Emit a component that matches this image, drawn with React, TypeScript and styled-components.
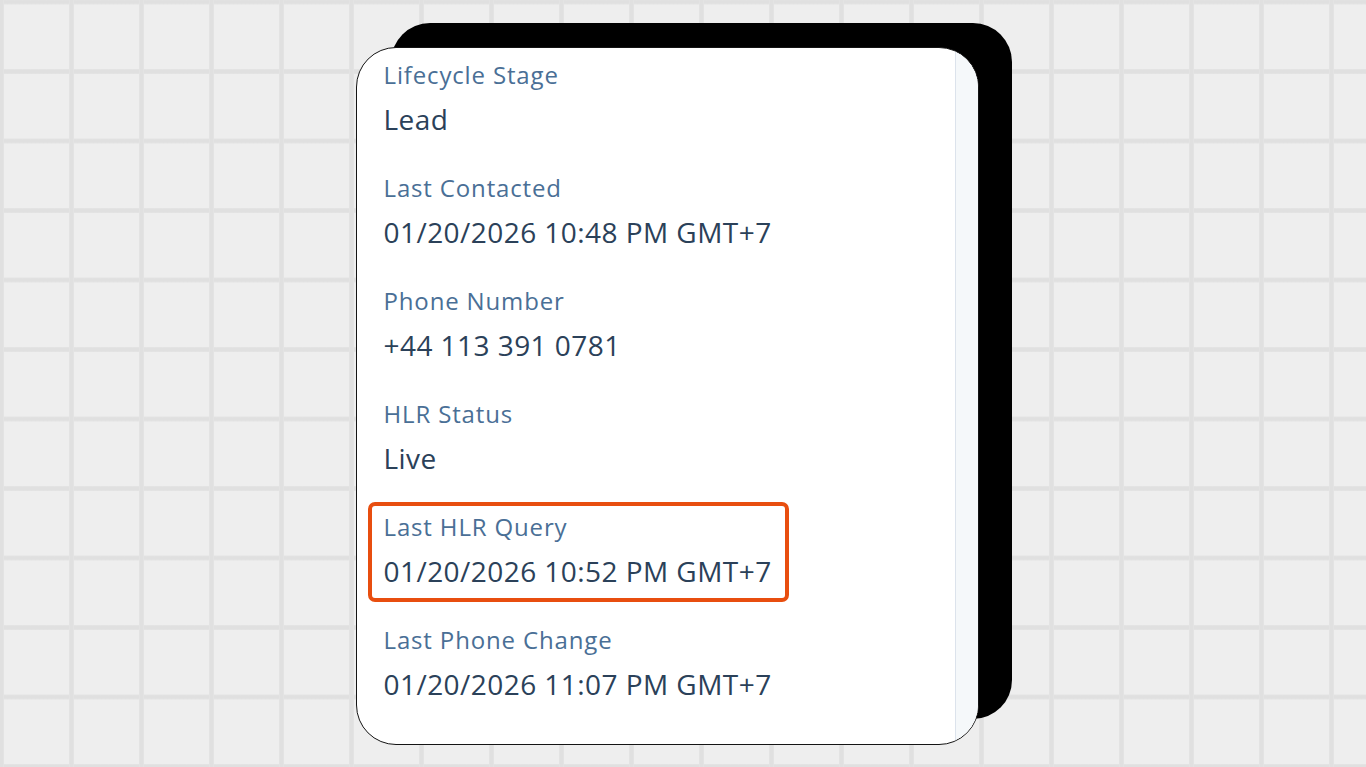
import styled, { createGlobalStyle } from 'styled-components';

const GlobalStyle = createGlobalStyle`
  html, body {
    margin: 0;
    padding: 0;
  }
  body {
    font-family: 'Open Sans', 'Noto Sans', sans-serif;
    background-color: #eeeeee;
    background-image:
      linear-gradient(to right, #e6e6e6 0, #e0e0e0 1px, #e0e0e0 4px, #e6e6e6 5px, transparent 5px),
      linear-gradient(to bottom, #e6e6e6 0, #e0e0e0 1px, #e0e0e0 4px, #e6e6e6 5px, transparent 5px);
    background-size: 70px 69.5px;
    background-position: 69px 69px;
  }
`;

// === LAYOUT ===

const Page = styled.div`
  width: 100vw;
  height: 100vh;
  display: flex;
  align-items: center;
  justify-content: center;
  overflow: hidden;
`;

const Stage = styled.div`
  padding: 25px 32px 0 0;
`;

const Card = styled.div`
  width: 623px;
  height: 698px;
  box-sizing: border-box;
  display: flex;
  background: #ffffff;
  border: 1.5px solid #141414;
  border-radius: 40px;
  overflow: hidden;
  box-shadow: 34px -25px 0 -1px #000000;
`;

const PropertyList = styled.div`
  flex: 1;
  padding: 11px 27px 0;
  display: flex;
  flex-direction: column;
`;

const ScrollTrack = styled.div`
  width: 22px;
  flex-shrink: 0;
  background: #f5f8fa;
  border-left: 1.5px solid #dce3ec;
`;

// === FIELD ===

const Field = styled.div<{ $highlight?: boolean }>`
  position: relative;
  margin-bottom: 33px;

  ${({ $highlight }) => $highlight && `
    &::after {
      content: '';
      position: absolute;
      top: -9px;
      left: -16px;
      width: 421px;
      height: 100px;
      box-sizing: border-box;
      border: 4px solid #e84e0f;
      border-radius: 7px;
      pointer-events: none;
    }
  `}
`;

const Label = styled.div`
  font-size: 24px;
  line-height: 32px;
  color: #4a6f96;
  white-space: nowrap;
  letter-spacing: 0.85px;
`;

const Value = styled.div`
  margin-top: 8px;
  font-size: 28px;
  line-height: 40px;
  color: #2b4159;
  white-space: nowrap;
  letter-spacing: 0.45px;
`;

const fields = [
  { label: 'Lifecycle Stage', value: 'Lead' },
  { label: 'Last Contacted', value: '01/20/2026 10:48 PM GMT+7' },
  { label: 'Phone Number', value: '+44 113 391 0781' },
  { label: 'HLR Status', value: 'Live' },
  { label: 'Last HLR Query', value: '01/20/2026 10:52 PM GMT+7', highlight: true },
  { label: 'Last Phone Change', value: '01/20/2026 11:07 PM GMT+7' },
  { label: 'Phone Line Type', value: 'Mobile' },
];

export default function App() {
  return (
    <>
      <GlobalStyle />
      <Page>
        <Stage>
          <Card>
            <PropertyList>
              {fields.map(f => (
                <Field key={f.label} $highlight={f.highlight}>
                  <Label>{f.label}</Label>
                  <Value>{f.value}</Value>
                </Field>
              ))}
            </PropertyList>
            <ScrollTrack />
          </Card>
        </Stage>
      </Page>
    </>
  );
}
